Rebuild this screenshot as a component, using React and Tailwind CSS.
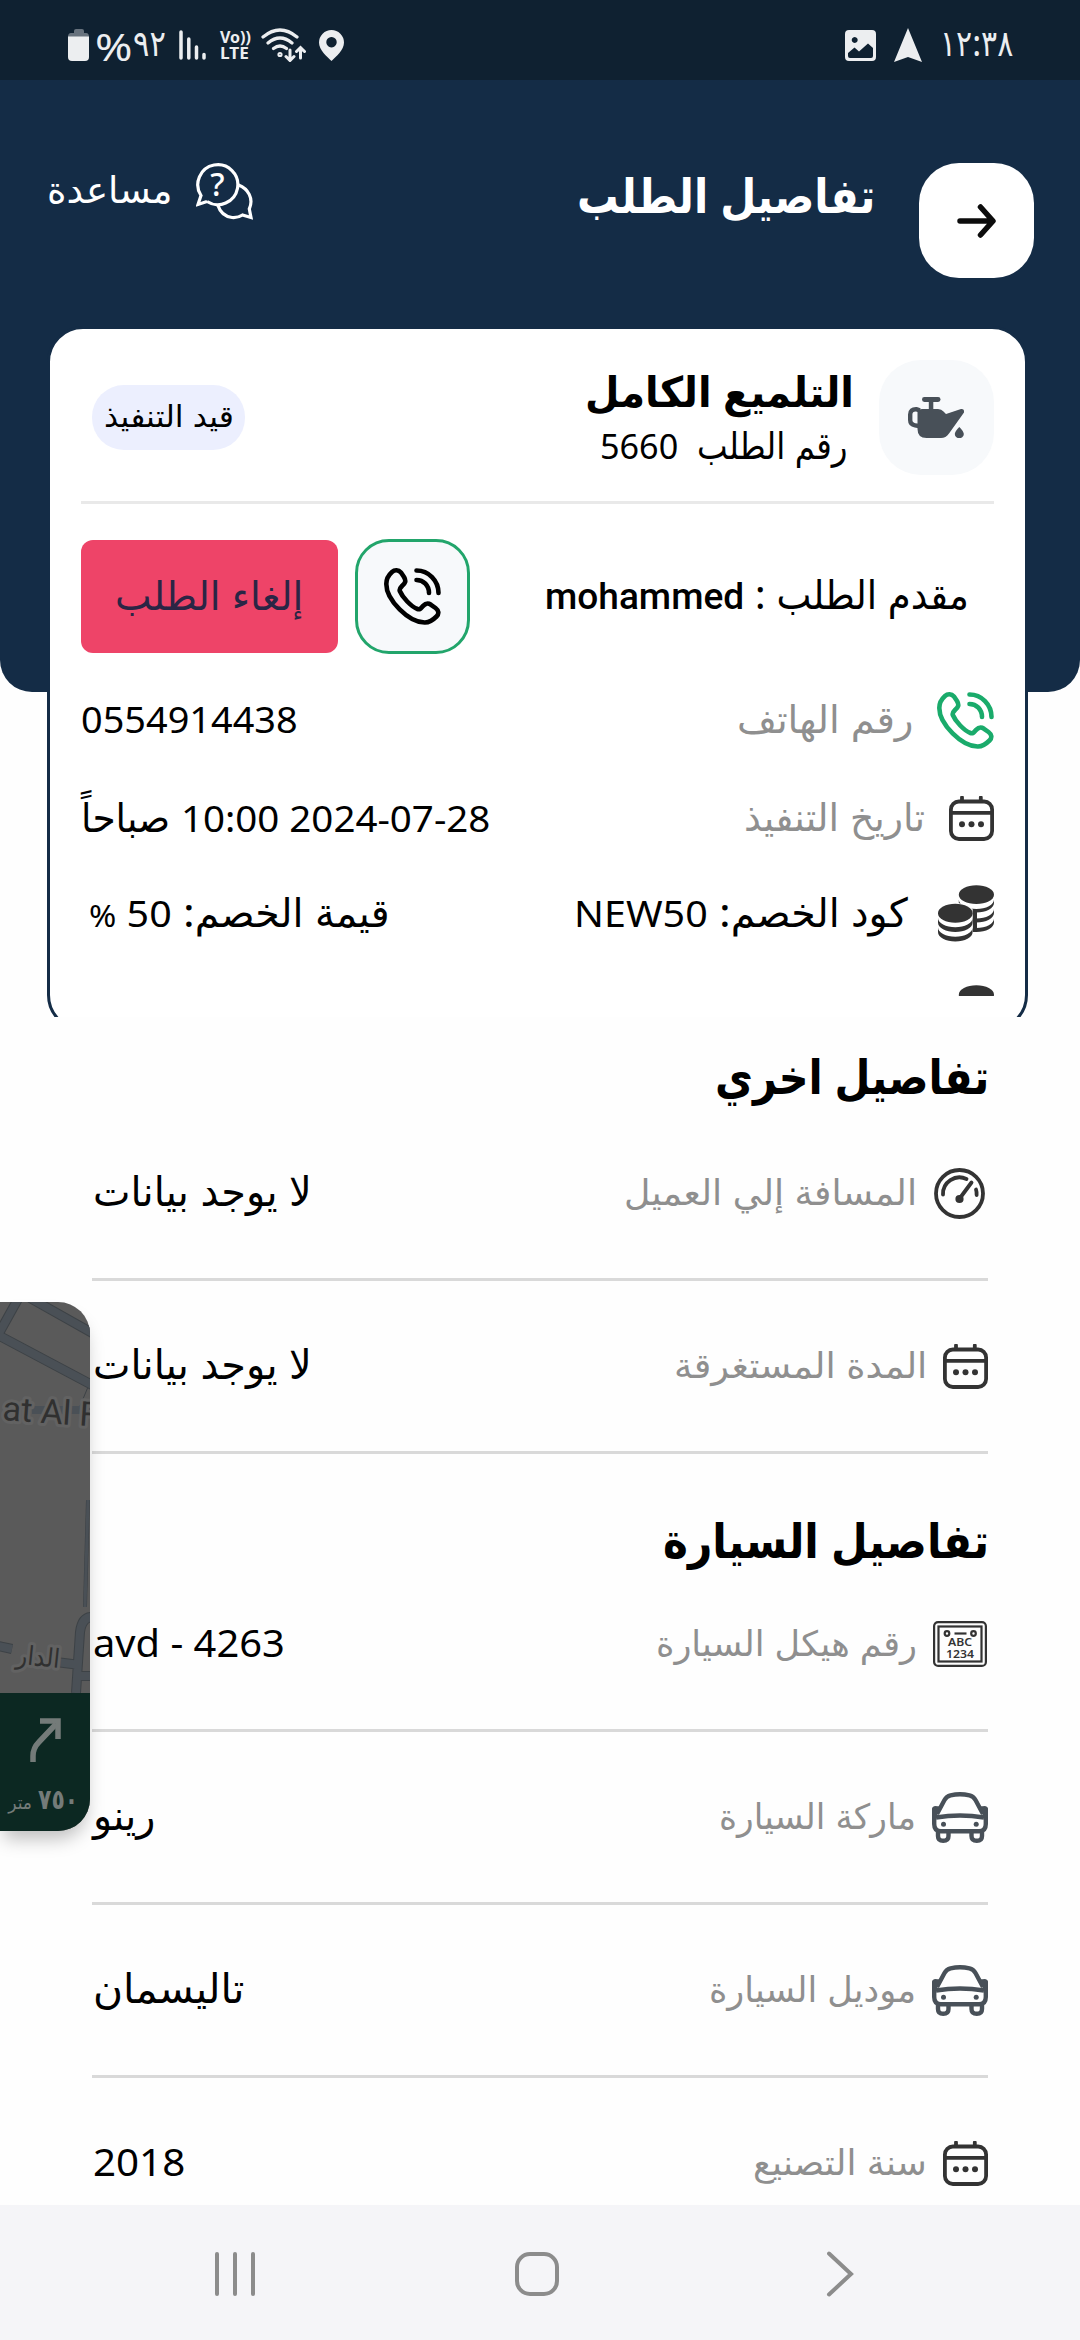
import React, { useLayoutEffect, useRef, useState } from "react";
import { clsx } from "clsx";

// One line of text, condensed or widened so that it fills the width of its box
const FitText = ({ children, className, ltr }) => {
  const box = useRef(null);
  const text = useRef(null);
  const [scale, setScale] = useState(1);

  useLayoutEffect(() => {
    setScale(box.current.clientWidth / text.current.offsetWidth);
  }, []);

  return (
    <div
      ref={box}
      dir={ltr ? "ltr" : "rtl"}
      className={clsx("flex shrink-0 leading-none whitespace-pre", className)}
    >
      <span
        ref={text}
        className={clsx("shrink-0", ltr ? "origin-left" : "origin-right")}
        style={{ transform: `scaleX(${scale})` }}
      >
        {children}
      </span>
    </div>
  );
};

const PhoneIcon = ({ className }) => (
  <svg
    viewBox="0 0 57 57"
    className={clsx("size-[57px] shrink-0", className)}
    fill="none"
    stroke="currentColor"
    strokeWidth="4.600"
    strokeLinecap="round"
    strokeLinejoin="round"
  >
    <path d="M17 4.5C14.500 1.800 10.500 1.800 8 4C3.500 8 2.300 11.500 2.300 16C2.300 32 25 54.800 41 54.500C46 54.300 49.500 51.500 52.500 48.500C55.300 45.600 54.800 42.500 51.500 40L47 36.800C43.500 34.600 41.500 35.500 39 38C36.500 41 35.500 41.800 33.500 41C27 38.500 18.500 29.500 15.800 23C15 21 16 20 18 18C21.500 14.800 22.300 13 20 9Z" />
    <path d="M32.500 2.500C44.500 2.500 54.500 12.500 54.500 25" />
    <path d="M32.500 12C39.500 12 45 17.500 45 25" />
  </svg>
);

const CalendarIcon = () => (
  <svg viewBox="0 0 45 45" className="size-[45px] shrink-0 text-[#333333]" fill="none" stroke="currentColor" strokeWidth="3.800">
    <rect x="1.900" y="5.500" width="41.200" height="37.500" rx="8" />
    <path d="M2 16.800H43" />
    <path d="M13 1.500V5M31.800 1.500V5" strokeLinecap="round" />
    <g fill="currentColor" stroke="none">
      <circle cx="13" cy="28.200" r="3" />
      <circle cx="22.500" cy="28.200" r="3" />
      <circle cx="32" cy="28.200" r="3" />
    </g>
  </svg>
);

const CoinsIcon = () => (
  <svg viewBox="0 0 56 57" className="h-[57px] w-[56px] shrink-0" fill="#333333">
    <ellipse cx="38.400" cy="9.700" rx="17.600" ry="9.400" />
    <path d="M20.800 14.500A17.600 9.400 0 0 0 56 14.500V18A17.600 9.400 0 0 1 20.800 18Z" />
    <path d="M20.800 24A17.600 9.400 0 0 0 56 24V28A17.600 9.400 0 0 1 20.800 28Z" />
    <path d="M20.800 33.500A17.600 9.400 0 0 0 56 33.500V37.500A17.600 9.400 0 0 1 20.800 37.500Z" />
    <path d="M34 25H39V47H34Z" />
    <path d="M-3 28A20.300 12 0 0 1 34.600 24L35 46Q34 54 30 57H-3Z" fill="#ffffff" />
    <ellipse cx="17.300" cy="28.200" rx="17.300" ry="9.500" />
    <path d="M0 32.800A17.300 9.500 0 0 0 34.600 32.800V37.500A17.300 9.500 0 0 1 0 37.500Z" />
    <path d="M0 42.300A17.300 9.500 0 0 0 34.600 42.300V47A17.300 9.500 0 0 1 0 47Z" />
  </svg>
);

const GaugeIcon = () => (
  <svg viewBox="0 0 51 51" className="mr-[3px] size-[51px] shrink-0" fill="none" stroke="#333333" strokeWidth="3.800" strokeLinecap="round">
    <circle cx="25.500" cy="25.500" r="23.500" />
    <path d="M9 26.500A16.500 16.500 0 0 1 32.500 11" />
    <path d="M42 21.500Q42.800 24 42.600 27" />
    <path d="M37.500 14.500L26 30" />
    <circle cx="25.500" cy="31" r="2.200" />
  </svg>
);

const PlateIcon = () => (
  <svg viewBox="0 0 54 46" className="mr-px h-[46px] w-[54px] shrink-0" fill="none" stroke="#333333" strokeWidth="2.200">
    <rect x="1.100" y="1.100" width="51.800" height="43.800" rx="4" />
    <rect x="5.500" y="5.500" width="43" height="35" />
    <circle cx="14" cy="12.500" r="2.300" />
    <circle cx="40.500" cy="12.500" r="2.300" />
    <path d="M21.500 12.500H33.500" />
    <g fill="#333333" stroke="none" direction="ltr" fontFamily="Noto Sans" fontWeight="600" fontSize="11" textAnchor="middle">
      <text x="27" y="25" textLength="24" lengthAdjust="spacingAndGlyphs">ABC</text>
      <text x="27" y="36.500" textLength="28" lengthAdjust="spacingAndGlyphs">1234</text>
    </g>
  </svg>
);

const CarIcon = () => (
  <svg viewBox="0 0 56 51" className="h-[51px] w-[56px] shrink-0" fill="none" stroke="#485058" strokeWidth="4.400" strokeLinejoin="round">
    <path d="M5 22L12.500 8Q14.500 4.300 18.500 3.300Q28 1.300 37.500 3.300Q41.500 4.300 43.500 8L51 22" />
    <path d="M4 25.500Q28 21.500 52 25.500" />
    <path d="M2.200 16.500V32Q2.200 39.300 9 39.300H47Q53.800 39.300 53.800 32V16.500" />
    <path d="M0 17Q0 14.500 3 14L8.500 14.500L5 24H0ZM56 17Q56 14.500 53 14L47.500 14.500L51 24H56Z" fill="#485058" stroke="none" />
    <path d="M6 40V44Q6 48.800 11.200 48.800Q16.500 48.800 16.500 44V40M39.500 40V44Q39.500 48.800 44.800 48.800Q50 48.800 50 44V40" />
    <g fill="#485058" stroke="none">
      <circle cx="11.500" cy="32.300" r="2.500" />
      <circle cx="44.200" cy="32.300" r="2.500" />
    </g>
  </svg>
);

const OilCanIcon = () => (
  <svg viewBox="0 0 57 41" className="h-[41px] w-[57px]" fill="#485058">
    <rect x="14" y="0" width="18.500" height="5" rx="2.400" />
    <rect x="20.800" y="3" width="4.500" height="11" />
    <path d="M9.500 14Q11 12 14 12H30Q33.500 12 35.500 14.500L38 17L53 12.100Q56.500 11.800 56 15.500L41 36.500Q37.800 41 33 41H18.500Q9.500 41 9.500 32Z" />
    <path d="M12 13.300L8.500 12.300Q2.200 12 2.200 17.500V23Q2.200 27.500 7 28.300L11 29" fill="none" stroke="#485058" strokeWidth="4.400" />
    <path d="M51.300 30Q46.800 34.500 46.800 37A4.500 4.300 0 0 0 55.800 37Q55.800 34.500 51.300 30Z" />
  </svg>
);

const HelpIcon = () => (
  <svg viewBox="0 0 57 57" className="size-[57px] shrink-0" fill="none" stroke="#ffffff" strokeWidth="3.200">
    <path d="M11 38.500L2 41.500L5 32.500A20 20 0 1 1 11 38.500" />
    <path d="M42.500 22C52 25.500 58 35.500 53.300 46L55 54.500L46.500 52Q42 55 36 54.500C29 53.500 24 49 22 42.500" />
    <text x="21.500" y="33" textAnchor="middle" fontFamily="Noto Sans" fontWeight="500" fontSize="32" fill="#ffffff" stroke="none">?</text>
  </svg>
);

const DetailRow = ({ icon, label, labelClass, value, valueClass, ltr, last }) => (
  <div className={clsx("mx-[92px] flex h-[173px] shrink-0 items-center justify-between", !last && "border-b-[3px] border-[#d9d9d9]", last && "pb-[3px]")}>
    <div className="flex items-center gap-[16px]">
      {icon}
      <FitText className={clsx("pb-1 text-[35px] text-[#8f8f8f]", labelClass)}>{label}</FitText>
    </div>
    <FitText ltr={ltr} className={clsx("ml-px pb-1.5", ltr ? "text-[39px]" : "text-[41px]", valueClass)}>{value}</FitText>
  </div>
);

const StatusBar = () => (
  <div className="flex h-20 items-center justify-between bg-[#0f2131] pt-2.5 pr-[67px] pb-0 pl-[68px] text-[#eceef0]">
    <div className="flex items-center">
      <FitText className="w-[73px] pb-1 text-[36px]">١٢:٣٨</FitText>
      <svg viewBox="0 0 28 34" className="mr-[18px] h-[34px] w-[28px]" fill="currentColor">
        <path d="M14 0L28 34L14 29L0 34Z" />
      </svg>
      <svg viewBox="0 0 31 31" className="mr-[18px] size-[31px]" fill="currentColor">
        <path fillRule="evenodd" d="M4 0H27Q31 0 31 4V27Q31 31 27 31H4Q0 31 0 27V4Q0 0 4 0ZM3 23V26Q3 28 5 28H26Q28 28 28 26V18L23 13.500L14 21.500L9.500 17.500ZM9.700 7A3 3 0 1 0 9.710 7Z" />
      </svg>
    </div>
    <div dir="ltr" className="flex items-center">
      <svg viewBox="0 0 21 32" className="h-8 w-[21px]" fill="currentColor">
        <path d="M6 2Q6 0 8 0H14Q16 0 16 2V4H18Q21 4 21 8H0Q0 4 3 4H6Z" opacity="0.4" />
        <path d="M0 7.500H21V28Q21 32 17 32H4Q0 32 0 28Z" />
      </svg>
      <FitText ltr className="ml-[6px] w-[37px] text-[39px]">%</FitText>
      <FitText className="ml-px w-[33px] pb-1 text-[36px]">٩٢</FitText>
      <svg viewBox="0 0 27 30" className="ml-[13px] h-[30px] w-[27px]" stroke="currentColor" strokeWidth="3.500" strokeLinecap="round">
        <path d="M2 2V28M9.800 9V28M17.500 17V28M25 24.500V28" />
      </svg>
      <div className="ml-3.5 flex w-[31px] flex-col text-[16px] font-bold">
        <FitText ltr className="w-[31px]">Vo))</FitText>
        <FitText ltr className="w-[29px]">LTE</FitText>
      </div>
      <svg viewBox="0 0 45 34" className="ml-2.5 h-[34px] w-[45px]" fill="none" stroke="currentColor" strokeWidth="3.200" strokeLinecap="round">
        <path d="M2 9Q19 -5 36 9M7 15Q19 5 31 15M12.500 20.500Q19 15.500 25.500 20.500" />
        <circle cx="19" cy="26.500" r="1" />
        <path d="M29 22V32M25 28.500L29 32.500L33 28.500M39.500 30V20M35.500 23.500L39.500 19.500L43.500 23.500" strokeWidth="3" />
      </svg>
      <svg viewBox="0 0 25 31" className="ml-[13px] h-[31px] w-[25px]" fill="currentColor">
        <path fillRule="evenodd" d="M12.500 0A12.500 12.500 0 0 1 25 12.500C25 20 17 26.500 12.500 31C8 26.500 0 20 0 12.500A12.500 12.500 0 0 1 12.500 0ZM12.500 7A5.200 5.200 0 1 0 12.510 7Z" />
      </svg>
    </div>
  </div>
);

const OrderCard = () => (
  <div className="mr-[52px] ml-[47px] h-[691px] shrink-0 overflow-hidden">
    <div className="flex h-[705px] flex-col rounded-[36px] border-[3px] border-[#142c46] bg-white px-[31px] pt-[31px]">
      <div className="flex h-[115px] items-start">
        <div className="flex h-[115px] w-[115px] items-center justify-center rounded-[42px] bg-[#f7f9fb]">
          <OilCanIcon />
        </div>
        <div className="mr-[25px] flex-1 pt-2.5">
          <FitText className="w-[269px] text-[42px] font-bold">التلميع الكامل</FitText>
          <FitText className="mt-[14px] mr-1.5 w-[248px] text-[37px]">
            رقم الطلب  <span className="text-[35px]">5660</span>
          </FitText>
        </div>
        <div className="mt-[25px] ml-[11px] flex h-[65px] w-[153px] items-center justify-center rounded-[32px] bg-[#eceffe]">
          <FitText className="w-[130px] pb-1 text-[30px]">قيد التنفيذ</FitText>
        </div>
      </div>
      <div className="mt-[26px] h-[3px] shrink-0 bg-[#e9e9e9]" />

      <div className="mt-[35px] flex h-[115px] items-center">
        <FitText className="mr-[25px] w-[424px] pb-1 text-[40px]">
          مقدم الطلب : <span className="font-['Roboto'] text-[36px] font-medium">mohammed</span>
        </FitText>
        <div className="mr-auto ml-[17px] flex h-[115px] w-[115px] items-center justify-center rounded-[34px] border-[3px] border-[#22a56b] bg-[#f7f9fb]">
          <PhoneIcon className="text-black" />
        </div>
        <div className="flex h-[113px] w-[257px] items-center justify-center rounded-xl bg-[#ee4468]">
          <FitText className="w-[188px] pb-1 text-[40px] text-[#2b2545]">إلغاء الطلب</FitText>
        </div>
      </div>

      <div className="mt-4 flex h-[100px] items-center">
        <PhoneIcon className="text-[#1aab6b]" />
        <FitText className="mr-6 w-[176px] pb-[5px] text-[38px] text-[#8f8f8f]">رقم الهاتف</FitText>
        <FitText ltr className="mr-auto w-[217px] pb-1 text-[37px]">0554914438</FitText>
      </div>
      <div className="flex h-[97px] items-center">
        <CalendarIcon />
        <FitText className="mr-6 w-[181px] pb-[5px] text-[38px] text-[#8f8f8f]">تاريخ التنفيذ</FitText>
        <FitText className="mr-auto w-[409px] pb-1 text-[40px]">
          <span className="text-[37px]">2024-07-28 10:00</span> صباحاً
        </FitText>
      </div>
      <div className="flex h-[93px] items-center">
        <CoinsIcon />
        <FitText className="mr-[30px] w-[334px] pb-1 text-[40px]">
          كود الخصم: <span className="text-[36px]">NEW50</span>
        </FitText>
        <FitText className="mr-auto ml-[8px] w-[301px] pb-1 text-[40px]">
          قيمة الخصم: <span className="text-[36px]">50 </span><span className="text-[30px]">%</span>
        </FitText>
      </div>
      <div className="flex h-[36px] items-start overflow-hidden pt-[25px]">
        <CoinsIcon />
      </div>
    </div>
  </div>
);

// Floating navigation window docked to the left edge
const MapOverlay = () => (
  <div className="absolute top-[1302px] left-0 h-[529px] w-[90px] overflow-hidden rounded-r-[32px] bg-[#5a5a5a] shadow-[0_12px_18px_-4px_rgba(0,0,0,0.25)]">
    <svg viewBox="0 0 90 391" className="block h-[391px] w-[90px]">
      <g fill="none" stroke="#3d4246" strokeWidth="10">
        <path d="M18 -3L-2 33M-4 32L94 84M30 -4L94 32" />
        <path d="M88 198L85 305" strokeWidth="4" />
        <path d="M76 391L80 330Q82 314 94 315M56 360L80 363M76 374H92M-2 344L12 347" />
        <path d="M88 85L80 104" strokeWidth="1" />
      </g>
      <g fill="none" stroke="#4a5056" strokeWidth="8">
        <path d="M18 -3L-2 33M-4 32L94 84M30 -4L94 32" />
        <path d="M88 198L85 305" strokeWidth="3" />
        <path d="M76 391L80 330Q82 314 94 315M56 360L80 363M76 374H92M-2 344L12 347M32 108H90" />
      </g>
      <g fill="#303030" stroke="#626262" strokeWidth="6" strokeLinejoin="round" paintOrder="stroke">
        <text x="2" y="118" direction="ltr" fontFamily="Roboto" fontSize="34" transform="rotate(4 2 118)">at Al F</text>
        <text x="59" y="366" direction="rtl" fontFamily="DejaVu Sans Condensed, DejaVu Sans" fontSize="26" transform="rotate(6 59 366)">الدار</text>
      </g>
    </svg>
    <div className="flex h-[138px] flex-col bg-[#0c2822] pt-[25px] text-[#747b79]">
      <svg viewBox="0 0 31 44" className="ml-[30px] h-[44px] w-[31px] self-end" fill="none" stroke="currentColor" strokeWidth="5.500">
        <path d="M3 44V38Q3 30 9 24L26 6" />
        <path d="M10 3H28V21" />
      </svg>
      <div className="mt-[22px] mr-3 flex items-end gap-1.5">
        <FitText className="w-[40px] text-[28px] font-bold">٧٥٠</FitText>
        <FitText className="w-[24px] text-[19px]">متر</FitText>
      </div>
    </div>
  </div>
);

const NavBar = () => (
  <div dir="ltr" className="relative flex h-[135px] shrink-0 items-center bg-[#f5f5f8] pt-0.5 text-[#8c8c8c]">
    <div className="ml-[215px] flex gap-[14px]">
      <div className="h-11 w-1 rounded-full bg-[#8c8c8c]" />
      <div className="h-11 w-1 rounded-full bg-[#8c8c8c]" />
      <div className="h-11 w-1 rounded-full bg-[#8c8c8c]" />
    </div>
    <div className="ml-[260px] h-[44px] w-[44px] rounded-[15px] border-4 border-[#8c8c8c]" />
    <svg viewBox="0 0 30 46" className="ml-[267px] h-[46px] w-[30px]" fill="none" stroke="currentColor" strokeWidth="4" strokeLinecap="round">
      <path d="M3 2.500L25 23L3 43.500" />
    </svg>
  </div>
);

const App = () => {
  return (
    <div
      dir="rtl"
      className="relative flex h-[2340px] w-[1080px] flex-col overflow-hidden bg-[#fefefe] font-['Noto_Sans','DejaVu_Sans_Condensed','DejaVu_Sans',sans-serif] text-black"
    >
      <div className="h-[692px] shrink-0 rounded-b-[32px] bg-[#142c46]">
        <StatusBar />
        <div className="mt-[83px] flex items-start pr-[46px] pl-[47px]">
          <div className="flex size-[115px] items-center justify-center rounded-[40px] bg-white">
            <svg viewBox="0 0 39 34" className="h-[34px] w-[39px]" fill="none" stroke="#0c0c0c" strokeWidth="5.500" strokeLinecap="round" strokeLinejoin="round">
              <path d="M3 17H35M23.500 3L36 17L23.500 31" />
            </svg>
          </div>
          <FitText className="mt-2 mr-[44px] w-[298px] text-[48px] font-bold text-white">تفاصيل الطلب</FitText>
          <div className="mr-auto flex items-center gap-[24px] text-white">
            <HelpIcon />
            <FitText className="w-[125px] pb-1.5 text-[37px]">مساعدة</FitText>
          </div>
        </div>
      </div>

      <div className="-mt-[366px]">
        <OrderCard />
      </div>

      <div className="flex h-[91px] shrink-0 items-end pr-[91px] pb-2">
        <FitText className="w-[274px] text-[48px] font-bold">تفاصيل اخري</FitText>
      </div>
      <DetailRow icon={<GaugeIcon />} label="المسافة إلي العميل" labelClass="w-[293px] mr-px" value="لا يوجد بيانات" valueClass="w-[219px]" />
      <DetailRow icon={<CalendarIcon />} label="المدة المستغرقة" labelClass="w-[253px]" value="لا يوجد بيانات" valueClass="w-[219px]" />

      <div className="flex h-[105px] shrink-0 items-end pr-[91px]">
        <FitText className="-mb-[5px] w-[326px] text-[48px] font-bold">تفاصيل السيارة</FitText>
      </div>
      <DetailRow icon={<PlateIcon />} label="رقم هيكل السيارة" labelClass="w-[261px]" value="avd - 4263" valueClass="w-[192px]" ltr />
      <DetailRow icon={<CarIcon />} label="ماركة السيارة" labelClass="w-[197px]" value="رينو" valueClass="w-[62px]" />
      <DetailRow icon={<CarIcon />} label="موديل السيارة" labelClass="w-[207px]" value="تاليسمان" valueClass="w-[151px]" />
      <div className="h-[127px] shrink-0 overflow-hidden">
        <DetailRow icon={<CalendarIcon />} label="سنة التصنيع" labelClass="w-[174px]" value="2018" valueClass="w-[92px]" ltr last />
      </div>

      <NavBar />
      <MapOverlay />
    </div>
  );
};

export default App;
